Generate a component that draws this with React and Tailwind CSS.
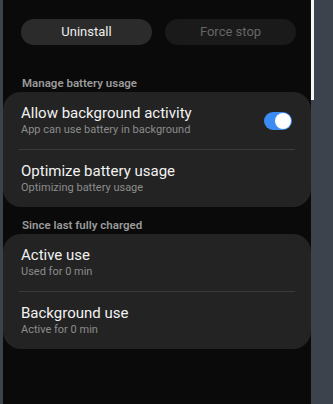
import React from 'react';

const Row = ({ title, subtitle, toggle }) => (
  <div className="flex h-[57px] items-center pl-[18px] pr-[19px]">
    <div className="flex flex-1 flex-col">
      <span className="text-[15px] leading-[18px] text-[#f2f2f2]">{title}</span>
      <span className="mt-[1px] text-[11px] leading-[14px] text-[#8c8c8c]">{subtitle}</span>
    </div>
    {toggle && (
      <div className="relative h-[18px] w-[28px] rounded-full bg-[#3a8cf2]">
        <div className="absolute right-[1px] top-[1px] h-[16px] w-[16px] rounded-full bg-white" />
      </div>
    )}
  </div>
);

const Card = ({ children }) => (
  <div className="rounded-[18px] bg-[#232323]">{children}</div>
);

const Divider = () => <div className="mx-[16px] h-px bg-[#3a3a3a]" />;

const App = () => {
  return (
    <div
      className="flex h-[404px] w-[333px] bg-[#3c434c]"
      style={{ fontFamily: 'Roboto, "Noto Sans", sans-serif' }}
    >
      <div className="ml-[3px] flex w-[308px] flex-col bg-[#0a0a0a] pt-[19px]">
        <div className="flex gap-[13px] pl-[18px] pr-[15px]">
          <button className="h-[26px] w-[131px] rounded-full bg-[#2b2b2b] text-[13px] text-[#ededed]">
            Uninstall
          </button>
          <button className="h-[26px] w-[131px] rounded-full bg-[#1a1a1a] text-[13px] text-[#666666]">
            Force stop
          </button>
        </div>
        <div className="mt-[31px] pl-[19px] text-[11.5px] font-semibold leading-[14px] text-[#9a9a9a]">
          Manage battery usage
        </div>
        <div className="mt-[2px]">
          <Card>
            <Row title="Allow background activity" subtitle="App can use battery in background" toggle />
            <Divider />
            <Row title="Optimize battery usage" subtitle="Optimizing battery usage" />
          </Card>
        </div>
        <div className="mt-[11px] pl-[19px] text-[11.5px] font-semibold leading-[14px] text-[#9a9a9a]">
          Since last fully charged
        </div>
        <div className="mt-[2px]">
          <Card>
            <Row title="Active use" subtitle="Used for 0 min" />
            <Divider />
            <Row title="Background use" subtitle="Active for 0 min" />
          </Card>
        </div>
      </div>
      <div className="h-[100px] w-[3px] bg-[#f5f5f5]" />
    </div>
  );
};

export default App;
